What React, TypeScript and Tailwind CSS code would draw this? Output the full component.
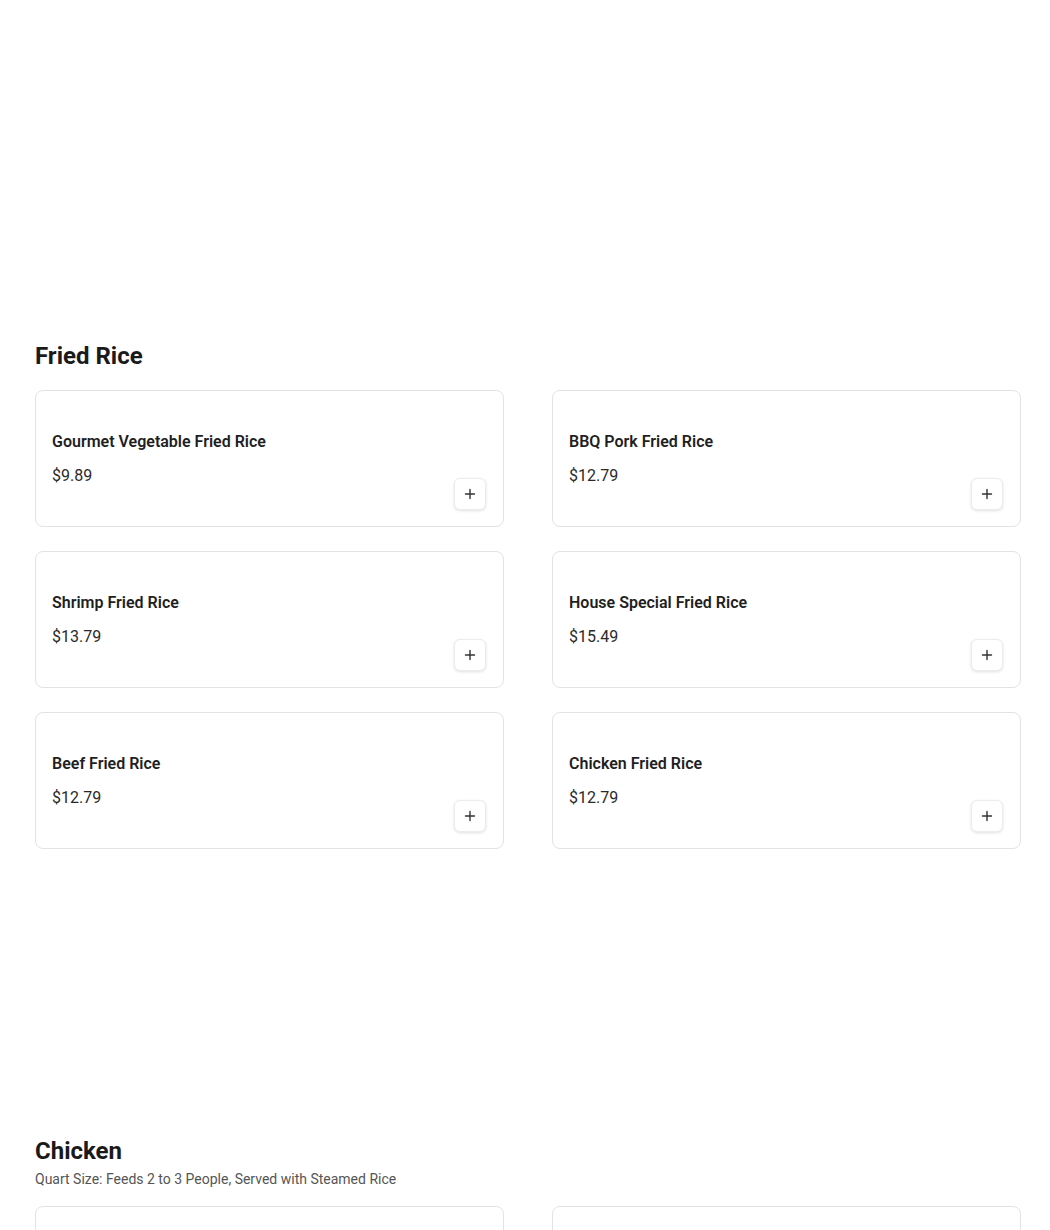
import React from 'react';

interface Item {
  name: string;
  price: string;
}

const friedRice: Item[] = [
  { name: 'Gourmet Vegetable Fried Rice', price: '$9.89' },
  { name: 'BBQ Pork Fried Rice', price: '$12.79' },
  { name: 'Shrimp Fried Rice', price: '$13.79' },
  { name: 'House Special Fried Rice', price: '$15.49' },
  { name: 'Beef Fried Rice', price: '$12.79' },
  { name: 'Chicken Fried Rice', price: '$12.79' },
];

const PlusIcon = () => (
  <svg width="12" height="12" viewBox="0 0 12 12" fill="none">
    <path d="M6 1.5v9M1.5 6h9" stroke="#333" strokeWidth="1.4" strokeLinecap="round" />
  </svg>
);

const ItemCard: React.FC<{ item: Item }> = ({ item }) => (
  <div className="flex h-[137px] justify-between rounded-lg border border-[#e3e3e3] bg-white pb-4 pl-4 pr-[17px] pt-[39px]">
    <div className="flex flex-col gap-[10px]">
      <h4 className="text-base leading-6 font-semibold text-[#1f1f1f]">{item.name}</h4>
      <p className="text-base leading-6 text-[#2a2a2a]">{item.price}</p>
    </div>
    <button className="flex h-8 w-8 items-center justify-center self-end rounded-md border border-[#ececec] bg-white shadow-[0_1px_3px_rgba(0,0,0,0.12)]">
      <PlusIcon />
    </button>
  </div>
);

const App: React.FC = () => {
  return (
    <div className="h-[1230px] overflow-hidden bg-white pl-[35px] pr-[29px] font-['Roboto',sans-serif]">
      {/* space above the first section */}
      <div className="h-[340px]" />

      <section>
        <h2 className="mb-[18px] text-2xl leading-8 font-bold text-[#1a1a1a]">Fried Rice</h2>
        <div className="grid grid-cols-2 gap-x-12 gap-y-6">
          {friedRice.map((item) => (
            <ItemCard key={item.name} item={item} />
          ))}
        </div>
      </section>

      <section className="mt-[286px]">
        <h2 className="text-2xl leading-8 font-bold text-[#1a1a1a]">Chicken</h2>
        <p className="mt-0.5 text-sm leading-5 text-[#555]">
          Quart Size: Feeds 2 to 3 People, Served with Steamed Rice
        </p>
        <div className="mt-[17px] grid grid-cols-2 gap-x-12 gap-y-6">
          <div className="h-[137px] rounded-lg border border-[#e3e3e3] bg-white" />
          <div className="h-[137px] rounded-lg border border-[#e3e3e3] bg-white" />
        </div>
      </section>
    </div>
  );
};

export default App;
